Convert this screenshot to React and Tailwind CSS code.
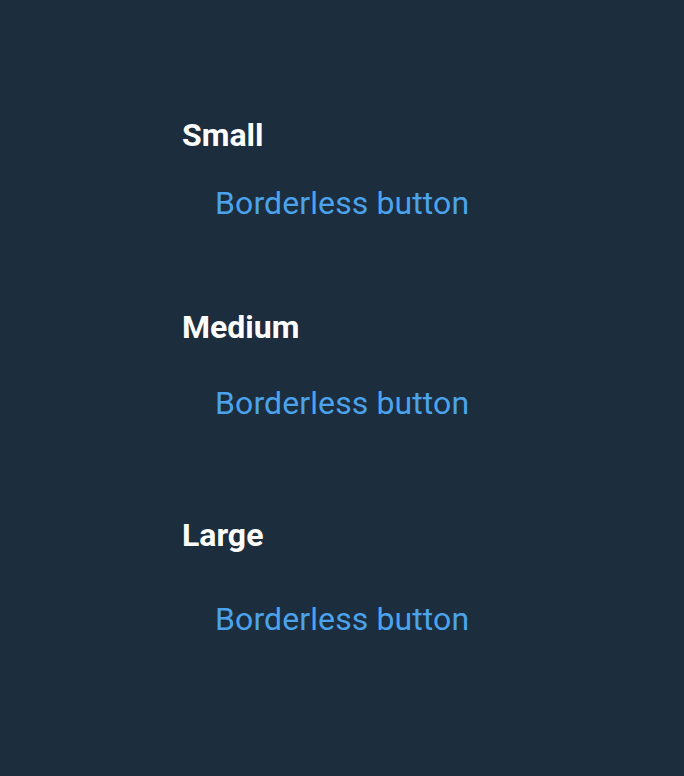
import React from "react";

const sizes = [
  { label: "Small", btn: "h-12" },
  { label: "Medium", btn: "h-16" },
  { label: "Large", btn: "h-20" },
];

export default function App() {
  return (
    <div
      className="min-h-screen bg-[#1c2d3e] pt-[115px] pl-[182px]"
      style={{ fontFamily: "Roboto, 'Noto Sans', sans-serif" }}
    >
      <div className="flex flex-col gap-20">
        {sizes.map((s) => (
          <section key={s.label} className="flex flex-col">
            <h2 className="text-[32px] leading-[40px] font-bold text-white">
              {s.label}
            </h2>
            <div className="mt-6 flex">
              <button
                className={`${s.btn} flex items-center pl-[33px] pr-4 text-[32px] tracking-[0.1px] text-[#4ba3ec] bg-transparent`}
              >
                Borderless button
              </button>
            </div>
          </section>
        ))}
      </div>
    </div>
  );
}
